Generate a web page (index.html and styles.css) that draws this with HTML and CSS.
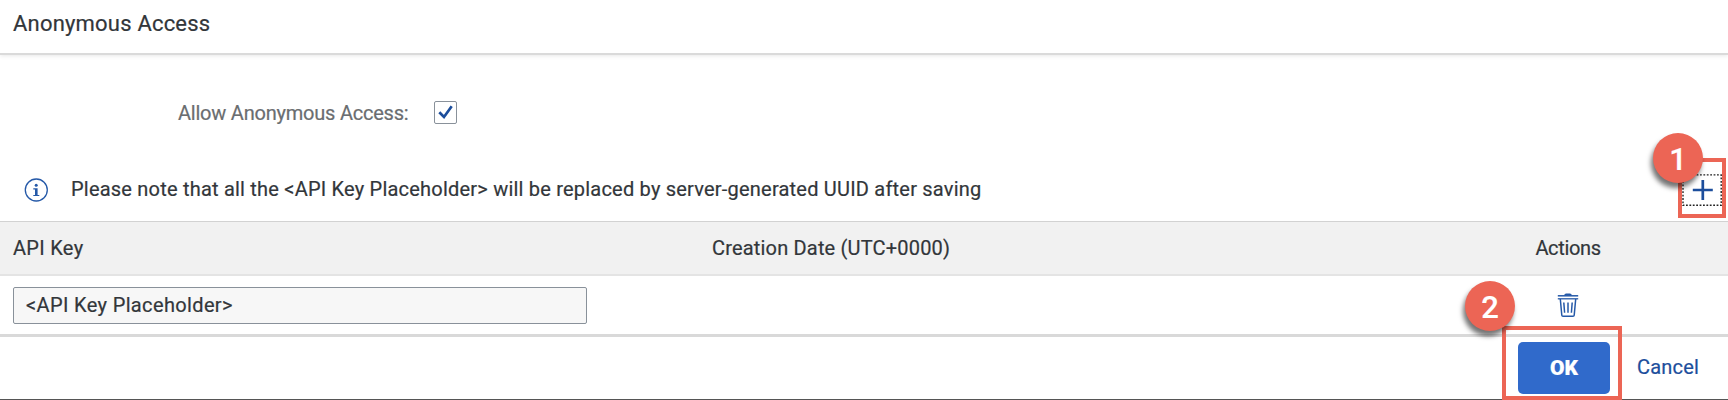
FILE: index.html
```html
<!DOCTYPE html>
<html lang="en">
<head>
<meta charset="utf-8">
<title>Anonymous Access</title>
<link rel="stylesheet" href="styles.css">
</head>
<body>
<main class="dialog">
  <header class="title-bar"><h1 class="title">Anonymous Access</h1></header>
  <section class="setting">
    <span class="setting-label">Allow Anonymous Access:</span>
    <span class="checkbox" role="checkbox" aria-checked="true">
      <svg width="21" height="21" viewBox="0 0 21 21"><path d="M4.3 10.2 9 15 16.7 4.3" fill="none" stroke="#1c4e9c" stroke-width="2.7"/></svg>
    </span>
  </section>
  <section class="notice">
    <svg class="info" width="24" height="24" viewBox="0 0 24 24"><circle cx="12.3" cy="12" r="11" fill="none" stroke="#2559a8" stroke-width="1.3"/><circle cx="12.2" cy="7.2" r="1.5" fill="#2559a8"/><path d="M9.3 10.2h4.3v6.7h1.7v1.2h-6v-1.2H11v-5.5H9.3z" fill="#2559a8"/></svg>
    <span class="notice-text">Please note that all the &lt;API Key Placeholder&gt; will be replaced by server-generated UUID after saving</span>
    <div class="add-slot">
      <button class="add" aria-label="Add"><svg width="40" height="32" viewBox="0 0 40 32"><rect x="1" y=".9" width="38.2" height="30.4" fill="none" stroke="#222" stroke-width="1.4" stroke-dasharray="1.8 1.6"/><path d="M20.8 6v20M10.8 16h20" stroke="#1c4e9c" stroke-width="2.7"/></svg></button>
      <span class="badge badge-add">1</span>
    </div>
  </section>
  <div class="row head">
    <span class="key-title">API Key</span>
    <span class="date-title">Creation Date (UTC+0000)</span>
    <span class="actions"><span class="actions-title">Actions</span></span>
  </div>
  <div class="row item">
    <span class="field">&lt;API Key Placeholder&gt;</span>
    <span></span>
    <span class="actions">
      <svg class="trash" width="22" height="25" viewBox="0 0 22 25"><g fill="none" stroke="#2559a8"><path d="M.8 2.8h20.4" stroke-width="1.5"/><path d="M.8 5.8h20.4" stroke-width="1.3"/><path d="M3.3 6l1.5 16.2q.1 1.1 1.2 1.1h10q1.1 0 1.2-1.1L18.7 6" stroke-width="1.5"/><path d="M6.8 9.5l.8 10.3M11 9.5v10.3M15.2 9.5l-.8 10.3" stroke-width="1.5"/></g><path d="M7.2 2.5q0-2 2-2h3.6q2 0 2 2z" fill="#2559a8"/></svg>
    </span>
  </div>
  <footer class="footer">
    <div class="ok-slot">
      <button class="ok">OK</button>
      <span class="badge badge-ok">2</span>
    </div>
    <button class="cancel">Cancel</button>
  </footer>
</main>
</body>
</html>
```
FILE: styles.css
```css
* { box-sizing: border-box; }

body {
  margin: 0;
  background: #fff;
  color: #32363a;
  font: 20px/24px Roboto, "Liberation Sans", sans-serif;
  -webkit-text-stroke: 0.2px currentColor;
}

button {
  padding: 0;
  border: 0;
  background: none;
  font: inherit;
}

svg { display: block; }

.dialog {
  display: flex;
  flex-direction: column;
  width: 1728px;
  height: 400px;
  overflow: hidden;
  background: linear-gradient(#555, #555) bottom / 100% 1px no-repeat;
}

.title-bar {
  height: 55px;
  padding: 11px 13px 0;
  border-bottom: 2px solid #dadada;
  box-shadow: 0 1px 4px #00000018;
}

.title {
  margin: 0;
  font-size: 22px;
  font-weight: 400;
  line-height: 26px;
  letter-spacing: 0.2px;
}

.setting {
  display: flex;
  align-items: center;
  height: 103px;
  padding: 12px 0 0 178px;
}

.setting-label {
  width: 256px;
  color: #6a6d70;
  letter-spacing: -0.22px;
}

.checkbox {
  display: grid;
  place-items: center;
  width: 23px;
  height: 23px;
  border: 1px solid #89919a;
  border-radius: 2px;
}

.notice {
  display: flex;
  height: 63px;
  padding: 0 2px 0 24px;
}

.info { margin-top: 20px; }

.notice-text {
  margin: 19px auto 0 23px;
  letter-spacing: 0.21px;
  white-space: nowrap;
}

.add-slot {
  position: relative;
  width: 48px;
  height: 60px;
  padding: 12px 0 0;
  border: 4px solid #ec6555;
}

.add {
  display: block;
  width: 40px;
  height: 32px;
}

.badge {
  position: absolute;
  width: 50px;
  height: 50px;
  border-radius: 50%;
  background: #ec6555;
  box-shadow: -2px 5px 5px #0000008c;
  color: #fff;
  font: 500 31px/53px Roboto, "Liberation Sans", sans-serif;
  text-align: center;
}

.badge-add { top: -29px; left: -29px; }
.badge-ok { top: -49px; left: -41px; }

.row {
  display: grid;
  grid-template-columns: 699px 757px 198px;
  align-items: center;
  padding-left: 13px;
}

.head {
  height: 55px;
  border-top: 1px solid #d2d2d2;
  border-bottom: 2px solid #e4e4e4;
  background: #f1f1f1;
}

.key-title { letter-spacing: 0.3px; }
.date-title { letter-spacing: 0.18px; }
.actions-title { letter-spacing: -0.35px; }

.item {
  height: 61px;
  padding-top: 1px;
  border-bottom: 3px solid #d9d9d9;
}

.field {
  width: 574px;
  height: 37px;
  padding: 5px 12px;
  border: 1px solid #89919a;
  border-radius: 2px;
  background: #f7f7f7;
  letter-spacing: 0.36px;
}

.actions {
  display: flex;
  justify-content: center;
}

.footer {
  display: flex;
  flex: 1;
  padding-left: 1502px;
}

.ok-slot {
  position: relative;
  width: 120px;
  height: 74px;
  margin-top: -11px;
  padding: 12px 0 0 12px;
  border: 4px solid #ec6555;
}

.ok {
  width: 92px;
  height: 52px;
  border-radius: 5px;
  background: #306acb;
  color: #fff;
  font-size: 21px;
  font-weight: 900;
}

.cancel {
  height: 24px;
  margin: 18px 0 0 15px;
  color: #1c4e9c;
  letter-spacing: 0.2px;
}
```
